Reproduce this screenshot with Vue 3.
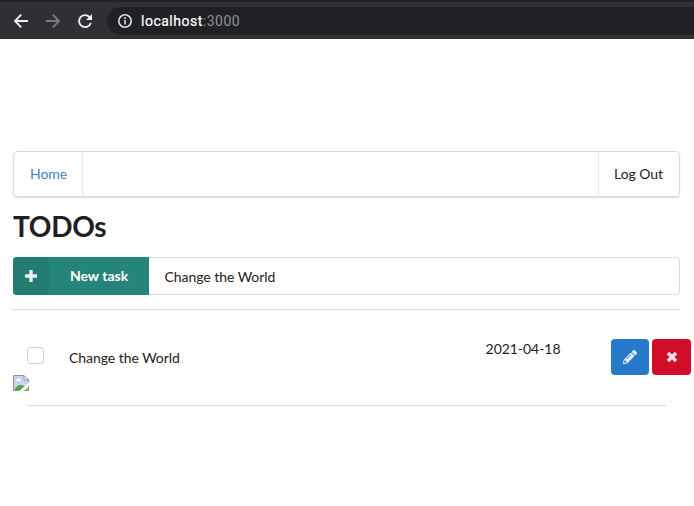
<script setup>
import { ref } from 'vue'

const newTask = ref('Change the World')
const todos = ref([{ id: 1, name: 'Change the World', dueDate: '2021-04-18', done: false }])
</script>

<template>
  <div class="page">
    <header class="toolbar">
      <svg class="nav-icon" viewBox="0 0 16 16"><path d="M15 8H2.5M8.2 1.7L2 8L8.2 14.3" /></svg>
      <svg class="nav-icon dim" viewBox="0 0 16 16"><path d="M1 8h12.5M7.8 1.7L14 8L7.8 14.3" /></svg>
      <svg class="nav-icon" viewBox="0 0 16 16">
        <path d="M13.8 10A6 6 0 1 1 12.4 3.9L14 5.5" />
        <path class="solid" d="M15 1v6H9z" />
      </svg>
      <div class="address">
        <svg class="info" viewBox="0 0 14 14">
          <circle cx="7" cy="7" r="6.2" />
          <path d="M7 6.1v4.4M7 3.3v1.7" />
        </svg>
        <span class="url">localhost<span class="port">:3000</span></span>
      </div>
    </header>

    <main class="content">
      <nav class="menu">
        <a class="item home">Home</a>
        <a class="item logout">Log Out</a>
      </nav>
      <h1>TODOs</h1>
      <div class="action-input">
        <button class="new-task">
          <span class="plus">
            <svg viewBox="0 0 12 12"><path d="M6 0v12M0 6h12" /></svg>
          </span>
          <span class="label">New task</span>
        </button>
        <input v-model="newTask" type="text" />
      </div>
      <div class="divider"></div>

      <section v-for="todo in todos" :key="todo.id" class="todo">
        <div class="row">
          <span class="checkbox"></span>
          <span class="name">{{ todo.name }}</span>
          <span class="date">{{ todo.dueDate }}</span>
          <button class="icon-button edit">
            <svg viewBox="0 0 512 512">
              <path d="M497.9 142.1l-46.1 46.1c-4.7 4.7-12.3 4.7-17 0l-111-111c-4.7-4.7-4.7-12.3 0-17l46.1-46.1c18.7-18.7 49.1-18.7 67.9 0l60.1 60.1c18.8 18.7 18.8 49.1 0 67.9zM284.2 99.8L21.6 362.4.4 483.9c-2.9 16.4 11.4 30.6 27.8 27.8l121.5-21.3 262.6-262.6c4.7-4.7 4.7-12.3 0-17l-111-111c-4.8-4.7-12.4-4.7-17.1 0zM124.1 339.9c-5.5-5.5-5.5-14.3 0-19.8l154-154c5.5-5.5 14.3-5.5 19.8 0s5.5 14.3 0 19.8l-154 154c-5.5 5.5-14.3 5.5-19.8 0zM88 424h48v36.3l-64.5 11.3-31.1-31.1L51.7 376H88v48z" />
            </svg>
          </button>
          <button class="icon-button delete">
            <svg class="cross" viewBox="0 0 12 12"><path d="M2 2l8 8M10 2l-8 8" /></svg>
          </button>
        </div>
        <svg class="attachment" viewBox="0 0 16 16">
          <path fill="#fff" d="M0 0h11l5 5v11H0z" />
          <path fill="#c3d4f5" d="M1 1h10v4h4v4l-7 6H1z" />
          <path fill="#fff" d="M2.5 6c0-1.2 1.2-1.4 1.6-1.3C4.5 2.6 7 3 7 4.6c1 0 1.3.7 1.2 1.4z" />
          <path fill="#51a533" d="M1.5 15c1-3 3.5-5 6-5 1.6 0 2.8.5 3.7 1.4L7.5 15z" />
          <path fill="#51a533" d="M12.5 15l2.5-2v2z" />
          <path fill="none" stroke="#929292" d="M7.5 15.5h-7V.5H11l4.5 4.5v2.7M11 .5V5h4.5M15.5 11v4.5H11" />
          <path fill="#fff" d="M16 7.6V10.2l-6.3 5.8H6.5z" />
        </svg>
        <div class="divider inset"></div>
      </section>
    </main>
  </div>
</template>

<style>
body {
  background: #fff;
}
</style>

<style scoped>
.page,
.page * {
  box-sizing: border-box;
}

.page {
  width: 694px;
  height: 506px;
  overflow: hidden;
  background: #fff;
  color: #1f2021;
  font: 14px/20px Lato, sans-serif;
  letter-spacing: -0.05px;
}

svg {
  display: block;
  flex: none;
}

button {
  border: 0;
  padding: 0;
  font-family: inherit;
  color: #fff;
}

.toolbar {
  display: flex;
  align-items: center;
  height: 39px;
  padding: 2px 0 0 13px;
  background: #302f34;
  border-top: 2px solid #202124;
  border-bottom: 1px solid #29282b;
}

.nav-icon {
  width: 16px;
  height: 16px;
  margin-right: 16px;
  fill: none;
  stroke: #eeeff1;
  stroke-width: 1.9;
}

.nav-icon.dim {
  stroke: #7b7b7e;
}

.nav-icon .solid {
  fill: #eeeff1;
  stroke: none;
}

.address {
  display: flex;
  align-items: center;
  flex: 1;
  height: 28px;
  margin-left: -2px;
  padding-left: 11px;
  border-radius: 14px 0 0 14px;
  background: #202124;
}

.info {
  width: 14px;
  height: 14px;
  margin-right: 9px;
  fill: none;
  stroke: #e0e1e3;
  stroke-width: 1.6;
}

.url {
  font: 14px/20px Roboto, sans-serif;
  letter-spacing: 0.5px;
  color: #fff;
  -webkit-text-stroke: 0.2px currentColor;
}

.port {
  color: #8e9195;
  -webkit-text-stroke: 0;
}

.content {
  padding: 112px 14px 0 13px;
}

.menu {
  display: flex;
  justify-content: space-between;
  height: 46px;
  border: 1px solid #d8d9d9;
  border-radius: 4px;
  box-shadow: 0 1px 2px rgba(34, 36, 38, 0.15);
}

.item {
  display: flex;
  align-items: center;
  padding: 0 15px 0 16px;
}

.home {
  width: 69px;
  color: #4180c8;
  border-right: 1px solid #e6e6e6;
}

.logout {
  width: 81px;
  padding: 0 0 0 15px;
  border-left: 1px solid #e6e6e6;
}

h1 {
  margin: 11px 0 13px;
  font-size: 28px;
  line-height: 36px;
  font-weight: 700;
  letter-spacing: -0.3px;
}

.action-input {
  display: flex;
  height: 38px;
}

.new-task {
  display: flex;
  width: 136px;
  border-radius: 4px 0 0 4px;
  overflow: hidden;
  background: #26857a;
}

.plus {
  display: flex;
  align-items: center;
  justify-content: center;
  width: 36px;
  height: 38px;
  background: #247d73;
}

.plus svg {
  width: 12px;
  height: 12px;
  fill: none;
  stroke: #e9f3f1;
  stroke-width: 3.4;
}

.label {
  flex: 1;
  font-size: 14px;
  font-weight: 700;
  line-height: 37px;
  letter-spacing: 0;
}

input {
  flex: 1;
  min-width: 0;
  padding: 2px 15px 0 15.5px;
  border: 1px solid #d8d9d9;
  border-left: 0;
  border-radius: 0 4px 4px 0;
  background: #fff;
  color: inherit;
  font: inherit;
  letter-spacing: inherit;
  outline: none;
}

.divider {
  height: 1px;
  margin-top: 14px;
  background: #d8d9d9;
}

.inset {
  margin: 14px 14px 0;
}

.todo {
  padding-top: 29px;
}

.row {
  display: grid;
  grid-template-columns: 56px 416px 126px 38px 42px;
  height: 36px;
  margin-right: -11px;
}

.checkbox {
  width: 17px;
  height: 17px;
  margin: 8px 0 0 14px;
  border: 1px solid #d0d1d2;
  border-radius: 3px;
}

.name {
  padding-top: 9px;
}

.date {
  padding-left: 0.6px;
}

.icon-button {
  display: flex;
  align-items: center;
  justify-content: center;
  width: 38px;
  height: 36px;
  border-radius: 4px;
}

.icon-button svg {
  width: 14px;
  height: 14px;
  fill: #e9f2fa;
}

.edit {
  background: #2678ca;
}

.row .delete {
  width: 39px;
  margin-left: 3px;
  background: #d00e29;
}

.icon-button .cross {
  width: 12px;
  height: 12px;
  fill: none;
  stroke: #fae7ea;
  stroke-width: 3.3;
}

.attachment {
  width: 16px;
  height: 16px;
}
</style>
